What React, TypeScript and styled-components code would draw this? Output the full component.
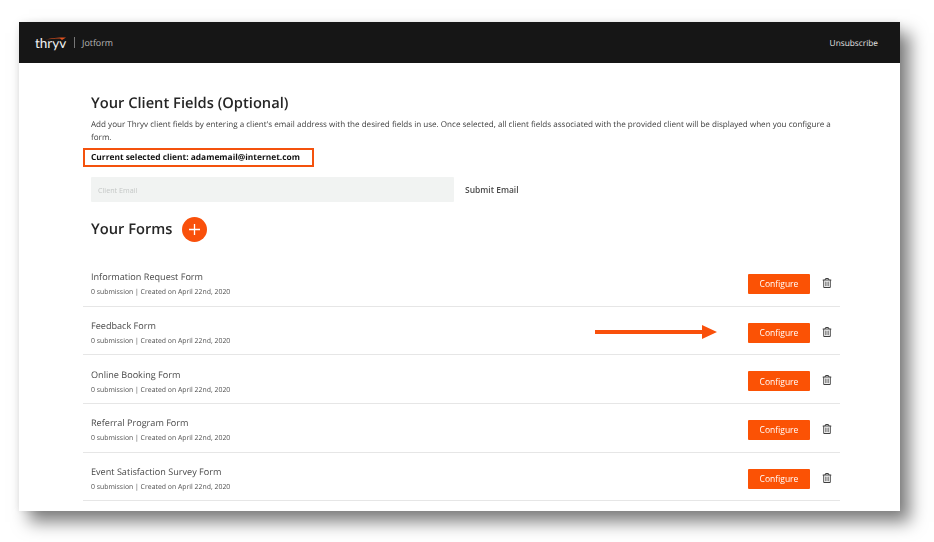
import React from "react";
import styled, { createGlobalStyle } from "styled-components";
import { FaRegTrashAlt } from "react-icons/fa";

const GlobalStyle = createGlobalStyle`
  html, body {
    margin: 0;
    padding: 0;
    background: #fff;
  }
  body {
    font-family: "Open Sans", "Liberation Sans", sans-serif;
    color: #2f2f2f;
    text-rendering: geometricPrecision;
  }
`;

const Stage = styled.div`
  width: 934px;
  height: 542px;
  padding: 22px 0 0 19px;
  box-sizing: border-box;
  overflow: hidden;
`;

const Window = styled.div`
  width: 881px;
  height: 489px;
  background: #fff;
  box-shadow: 10px 11px 16px rgba(0, 0, 0, 0.5), 0 0 8px rgba(0, 0, 0, 0.08);
  filter: blur(0.35px);
`;

const Header = styled.header`
  height: 41px;
  background: #161616;
  display: flex;
  align-items: center;
  justify-content: space-between;
  padding: 0 22px 0 16px;
  box-sizing: border-box;
`;

const Brand = styled.div`
  display: flex;
  align-items: center;
`;

const LogoWrap = styled.div`
  position: relative;
  font-family: "Lato", sans-serif;
  font-size: 13.5px;
  line-height: 16px;
  color: #f2f2f2;
  width: 31px;
`;

const Swoosh = styled.svg`
  position: absolute;
  left: 8px;
  top: 1px;
`;

const Divider = styled.span`
  width: 1px;
  height: 11px;
  background: #777;
  margin: 0 7px 0 8px;
`;

const Product = styled.span`
  font-size: 8.9px;
  color: #b9b9b9;
`;

const Unsubscribe = styled.a`
  margin-top: 1px;
  font-size: 8.3px;
  font-weight: 500;
  color: #e2e2e2;
`;

const Content = styled.main`
  position: relative;
  padding: 29px 0 0 64px;
`;

const Intro = styled.section`
  padding-left: 8px;
  width: 745px;
`;

const Title = styled.h1`
  margin: 0;
  font-size: 14.7px;
  line-height: 22px;
  font-weight: 600;
  color: #262626;
`;

const Description = styled.p`
  margin: 4px 0 0;
  font-size: 8.08px;
  line-height: 13px;
  color: #3d3d3d;
`;

const SelectedClient = styled.div`
  margin: 4px 0 0 -8px;
  width: 231px;
  height: 19px;
  box-sizing: border-box;
  border: 2px solid #f4520d;
  padding-left: 6px;
  display: flex;
  align-items: center;
  font-size: 8.38px;
  font-weight: 700;
  color: #111;
`;

const EmailRow = styled.div`
  margin-top: 10px;
  display: flex;
  align-items: center;
  gap: 11px;
`;

const EmailInput = styled.input`
  width: 363px;
  height: 25px;
  box-sizing: border-box;
  border: none;
  border-radius: 1px;
  background: #f1f3f2;
  padding: 0 7px;
  font-family: inherit;
  font-size: 7.2px;
  &::placeholder {
    color: #c4c7c6;
  }
`;

const SubmitButton = styled.button`
  border: none;
  background: none;
  padding: 0 0 1px;
  font-family: inherit;
  font-size: 8.45px;
  font-weight: 600;
  color: #4b4b4b;
`;

const FormsHeading = styled.div`
  margin-top: 14px;
  display: flex;
  align-items: center;
  gap: 10px;
  height: 26px;
`;

const FormsTitle = styled.h2`
  margin: 0 0 1px;
  font-size: 14.7px;
  font-weight: 600;
  color: #262626;
`;

const AddButton = styled.button`
  width: 25px;
  height: 25px;
  padding: 0;
  border: none;
  border-radius: 50%;
  background: #f9500b;
  display: flex;
  align-items: center;
  justify-content: center;
`;

const FormList = styled.ul`
  list-style: none;
  margin: 16px 0 0;
  padding: 0;
  width: 757px;
`;

const FormRow = styled.li`
  height: 48.7px;
  box-sizing: border-box;
  padding: 4px 0 0 8px;
  border-bottom: 1.5px solid #e6e6e6;
  display: flex;
  align-items: center;
  justify-content: space-between;
`;

const FormInfo = styled.div`
  display: flex;
  flex-direction: column;
  gap: 4px;
  margin-top: 1px;
`;

const FormName = styled.span`
  font-size: 9.1px;
  line-height: 13px;
  color: #4a4a4a;
`;

const FormMeta = styled.span`
  font-size: 6.9px;
  line-height: 11px;
  color: #4f4f4f;
`;

const Actions = styled.div`
  display: flex;
  align-items: center;
  gap: 12px;
  padding-right: 8px;
  color: #4a4a4a;
`;

const ConfigureButton = styled.button`
  width: 62px;
  height: 20px;
  padding: 0;
  border: none;
  border-radius: 1px;
  background: #fb5205;
  color: #fff;
  font-family: inherit;
  font-size: 8.5px;
`;

const TrashButton = styled.button`
  width: 10px;
  height: 20px;
  padding: 0;
  margin-top: -2px;
  border: none;
  background: none;
  color: #3f3f3f;
  display: flex;
  align-items: center;
  justify-content: center;
`;

const Arrow = styled.svg`
  position: absolute;
  left: 576px;
  top: 261px;
`;

const forms = [
  "Information Request Form",
  "Feedback Form",
  "Online Booking Form",
  "Referral Program Form",
  "Event Satisfaction Survey Form",
];

export default function App() {
  return (
    <Stage>
      <GlobalStyle />
      <Window>
        <Header>
          <Brand>
            <LogoWrap>
              thryv
              <Swoosh width="24" height="6" viewBox="0 0 24 6">
                <path d="M1 4 C8 2 15 1.5 23 1.5 L19 4 L17 2.6 C11 2.6 6 3.2 1 4Z" fill="#e2521f" />
              </Swoosh>
            </LogoWrap>
            <Divider />
            <Product>Jotform</Product>
          </Brand>
          <Unsubscribe>Unsubscribe</Unsubscribe>
        </Header>
        <Content>
          <Intro>
            <Title>Your Client Fields (Optional)</Title>
            <Description>
              Add your Thryv client fields by entering a client's email address with the desired fields in use. Once
              selected, all client fields associated with the provided client will be displayed when you configure a
              form.
            </Description>
            <SelectedClient>Current selected client: adamemail@internet.com</SelectedClient>
            <EmailRow>
              <EmailInput placeholder="Client Email" />
              <SubmitButton>Submit Email</SubmitButton>
            </EmailRow>
            <FormsHeading>
              <FormsTitle>Your Forms</FormsTitle>
              <AddButton>
                <svg width="13" height="13" viewBox="0 0 13 13">
                  <path d="M6.5 1v11M1 6.5h11" stroke="#fff" strokeWidth="1.3" />
                </svg>
              </AddButton>
            </FormsHeading>
          </Intro>
          <FormList>
            {forms.map((name) => (
              <FormRow key={name}>
                <FormInfo>
                  <FormName>{name}</FormName>
                  <FormMeta>0 submission | Created on April 22nd, 2020</FormMeta>
                </FormInfo>
                <Actions>
                  <ConfigureButton>Configure</ConfigureButton>
                  <TrashButton>
                    <FaRegTrashAlt size={10} />
                  </TrashButton>
                </Actions>
              </FormRow>
            ))}
          </FormList>
          <Arrow width="123" height="16" viewBox="0 0 123 16">
            <path d="M0 6h107V1l15 7-15 7v-5H0z" fill="#f9500b" />
          </Arrow>
        </Content>
      </Window>
    </Stage>
  );
}
